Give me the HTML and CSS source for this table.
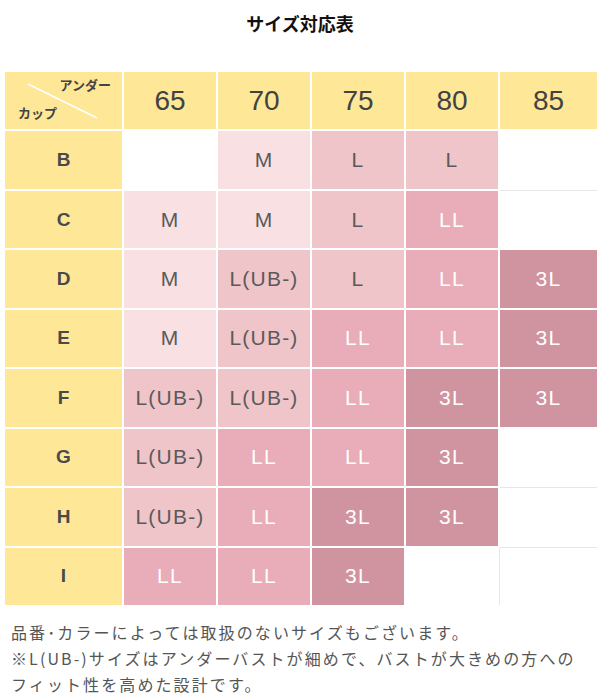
FILE: index.html
```html
<!DOCTYPE html>
<html lang="ja">
<head>
<meta charset="utf-8">
<title>サイズ対応表</title>
<link rel="stylesheet" href="styles.css">
</head>
<body>
<h1 class="title">サイズ対応表</h1>
<div class="chart">
  <div class="cell hd corner">
    <svg class="diag" width="117" height="57" viewBox="0 0 117 57"><line x1="23" y1="12" x2="92" y2="46" stroke="#fff" stroke-width="1.6"/></svg>
    <span class="under">アンダー</span>
    <span class="cup">カップ</span>
  </div>
  <div class="cell hd num">65</div>
  <div class="cell hd num">70</div>
  <div class="cell hd num">75</div>
  <div class="cell hd num">80</div>
  <div class="cell hd num">85</div>

  <div class="cell hd row">B</div>
  <div class="cell e"></div>
  <div class="cell m">M</div>
  <div class="cell l">L</div>
  <div class="cell l">L</div>
  <div class="cell e"></div>

  <div class="cell hd row">C</div>
  <div class="cell m">M</div>
  <div class="cell m">M</div>
  <div class="cell l">L</div>
  <div class="cell ll">LL</div>
  <div class="cell e gt"></div>

  <div class="cell hd row">D</div>
  <div class="cell m">M</div>
  <div class="cell l">L(UB-)</div>
  <div class="cell l">L</div>
  <div class="cell ll">LL</div>
  <div class="cell xl">3L</div>

  <div class="cell hd row">E</div>
  <div class="cell m">M</div>
  <div class="cell l">L(UB-)</div>
  <div class="cell ll">LL</div>
  <div class="cell ll">LL</div>
  <div class="cell xl">3L</div>

  <div class="cell hd row">F</div>
  <div class="cell l">L(UB-)</div>
  <div class="cell l">L(UB-)</div>
  <div class="cell ll">LL</div>
  <div class="cell xl">3L</div>
  <div class="cell xl">3L</div>

  <div class="cell hd row">G</div>
  <div class="cell l">L(UB-)</div>
  <div class="cell ll">LL</div>
  <div class="cell ll">LL</div>
  <div class="cell xl">3L</div>
  <div class="cell e"></div>

  <div class="cell hd row">H</div>
  <div class="cell l">L(UB-)</div>
  <div class="cell ll">LL</div>
  <div class="cell xl">3L</div>
  <div class="cell xl">3L</div>
  <div class="cell e gt"></div>

  <div class="cell hd row">I</div>
  <div class="cell ll">LL</div>
  <div class="cell ll">LL</div>
  <div class="cell xl">3L</div>
  <div class="cell e"></div>
  <div class="cell e gt gl"></div>
</div>
<div class="notes">
  <p>品番･カラーによっては取扱のないサイズもございます。</p>
  <p>※L(UB-)サイズはアンダーバストが細めで、バストが大きめの方への</p>
  <p>フィット性を高めた設計です。</p>
</div>
</body>
</html>
```
FILE: styles.css
```css
html, body {
  margin: 0;
  padding: 0;
  background: #fff;
}
body {
  width: 600px;
  font-family: "Liberation Sans", "Noto Sans CJK JP", sans-serif;
  color: #555;
}
.title {
  margin: 11px 0 0;
  font-family: "Noto Sans CJK JP", sans-serif;
  font-size: 18px;
  line-height: 24px;
  font-weight: 700;
  color: #111;
  text-align: center;
}
.chart {
  margin: 37px 0 0 5px;
  width: 592px;
  height: 533px;
  display: grid;
  grid-template-columns: 117px repeat(4, 92px) 97px;
  grid-template-rows: repeat(9, 1fr);
  gap: 2px;
}
.cell {
  position: relative;
  display: flex;
  align-items: center;
  justify-content: center;
  font-size: 21px;
  letter-spacing: 1.2px;
  color: #5a5a5a;
}
.hd {
  background: #fee797;
  color: #424242;
  letter-spacing: 0;
}
.num {
  font-size: 28px;
}
.row {
  font-size: 19px;
  font-weight: 700;
  color: #4a4a4a;
}
.corner {
  display: block;
  font-family: "Noto Sans CJK JP", sans-serif;
  font-size: 13px;
  font-weight: 700;
  color: #444;
}
.diag {
  position: absolute;
  left: 0;
  top: 0;
}
.under {
  position: absolute;
  right: 11px;
  top: 3px;
  line-height: 20px;
}
.cup {
  position: absolute;
  left: 13px;
  top: 31px;
  line-height: 20px;
}
.e { background: #fff; }
.m { background: #f8e0e3; }
.l { background: #f0c5c9; }
.ll { background: #e8adb8; color: #fff; }
.xl { background: #d093a0; color: #fff; }
.gt { box-shadow: 0 -1px 0 #e6e6e6; }
.gl { box-shadow: 0 -1px 0 #e6e6e6, -1px 0 0 #e6e6e6; }
.notes {
  margin: 14px 0 0 11px;
  font-family: "Noto Sans CJK JP", sans-serif;
  font-size: 16px;
  line-height: 26px;
  letter-spacing: 2.1px;
  color: #555;
}
.notes p {
  margin: 0;
}
```
